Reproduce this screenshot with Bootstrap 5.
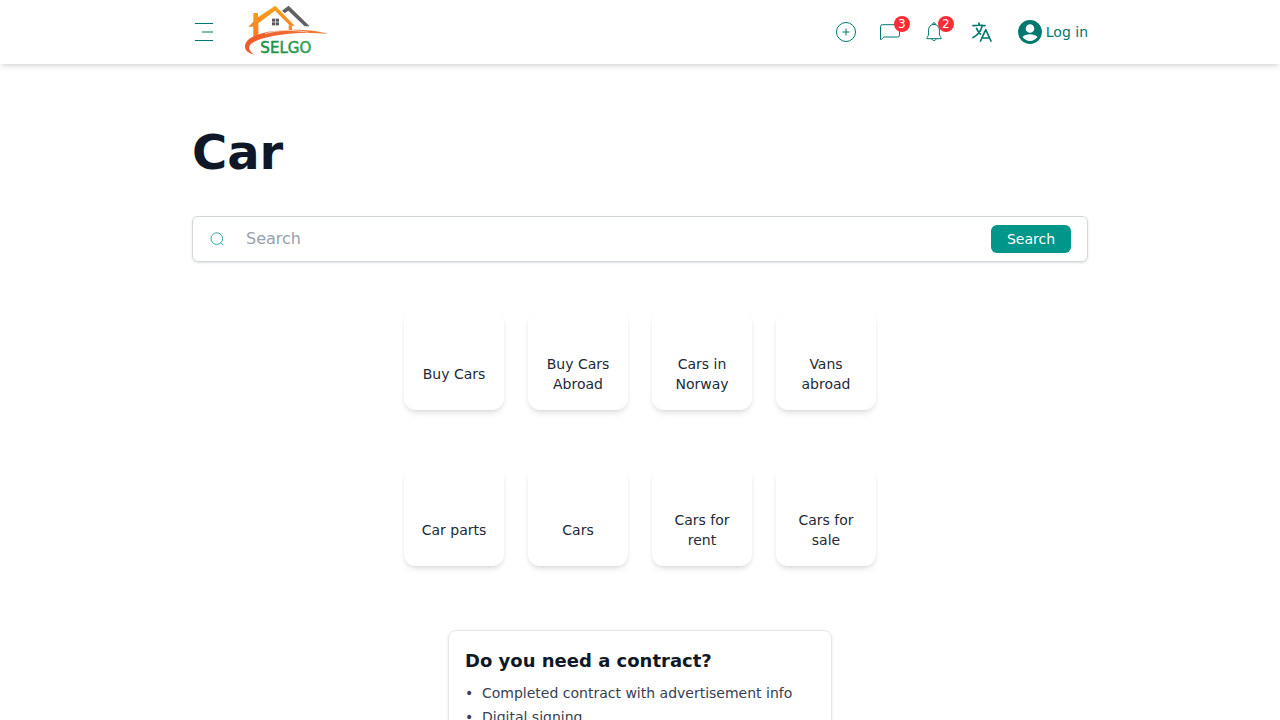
<!DOCTYPE html>
<html lang="en">
<head>
<meta charset="utf-8">
<meta name="viewport" content="width=device-width, initial-scale=1">
<title>Selgo – Car</title>
<link href="https://cdn.jsdelivr.net/npm/bootstrap@5.3.0/dist/css/bootstrap.min.css" rel="stylesheet">
<style>
body{font-family:"DejaVu Sans",sans-serif;background:#fff;color:#101828;height:100vh;overflow:hidden}
.wrap{width:896px;margin:0 auto}
.topbar{height:64px;background:#fff;box-shadow:0 4px 6px -1px rgba(0,0,0,.1),0 2px 4px -2px rgba(0,0,0,.1)}
.teal,.teal a{color:#00786f;text-decoration:none}
.logo{margin-left:28px;margin-top:-4px}
.actions{gap:20px}
.slot{width:24px;height:24px}
.count{position:absolute;left:16px;top:-4px;width:16px;height:16px;border-radius:50%;background:#fb2c36;color:#fff;font-size:12px;line-height:16px;text-align:center}
.login{font-size:14px;line-height:20px;margin-left:4px;gap:4px}
svg{display:block;flex:none}
h1{font-size:48px;line-height:48px;font-weight:700;margin:64px 0 40px}
.searchbox{height:46px;border:1px solid #d1d5dc;border-radius:6px;padding:0 16px;box-shadow:0 1px 3px rgba(0,0,0,.1),0 1px 2px -1px rgba(0,0,0,.1)}
.searchbox input{outline:0;padding:0;margin:-1px 0 0 21px;font-size:16px;line-height:24px;height:24px}
.searchbox input::placeholder{color:#99a1af;opacity:1}
.searchbox .go{width:80px;height:28px;padding:0;background:#009689;color:#fff;border:0;border-radius:6px;font-size:14px;line-height:28px}
.tiles{display:grid;grid-template-columns:repeat(4,100px);gap:56px 24px;justify-content:center;margin-top:48px}
.tile{height:100px;border-radius:12px;padding:28px 16px 0;color:#1e2939;font-size:14px;line-height:20px;text-decoration:none;box-shadow:0 4px 6px -1px rgba(0,0,0,.1),0 2px 4px -2px rgba(0,0,0,.1)}
.contract{width:384px;height:190px;margin:64px auto 0;border:1px solid #e5e7eb;border-radius:8px;padding:16px;box-shadow:0 1px 3px rgba(0,0,0,.1),0 1px 2px -1px rgba(0,0,0,.1)}
.contract h2{font-size:18px;line-height:28px;font-weight:700;margin:0 0 8px}
.contract li{font-size:14px;line-height:20px;margin-bottom:4px;color:#364153;display:flex}
.contract li::before{content:"•";width:17px}
</style>
</head>
<body>
<header class="topbar">
  <nav class="wrap h-100 d-flex align-items-center justify-content-between teal">
    <div class="d-flex align-items-center">
      <svg width="24" height="24" viewBox="0 0 24 24" fill="none" stroke="currentColor"><path d="M3 3.500h18M3 20.500h18"/><path d="M10 12h11" stroke-width="2" opacity=".5"/></svg>
      <svg class="logo" width="86" height="52" viewBox="24 12 258 156" role="img" aria-label="Selgo">
        <defs>
          <linearGradient id="roof" x1="0" y1="0" x2="0" y2="1"><stop stop-color="#f9a21b"/><stop offset="1" stop-color="#f47b2a"/></linearGradient>
          <linearGradient id="swoosh"><stop stop-color="#ee5a2b"/><stop offset="1" stop-color="#f47a35"/></linearGradient>
          <linearGradient id="word"><stop stop-color="#1d8f45"/><stop offset="1" stop-color="#2da052"/></linearGradient>
        </defs>
        <path d="M138 32 158 17 221 79h-15L157 32l-11 8z" fill="#606062"/>
        <path d="M37 80 52 65V39h14v13L118 17l58 60h-14L117 32 67 70v33l-15 7V80z" fill="url(#roof)"/>
        <path d="M158 76h10v16h-10z" fill="#f58a30"/>
        <path d="M108 56h21v20h-21z" fill="#58585a"/><path d="M118.500 55v22M107 66h23" stroke="#fff" stroke-width="2"/>
        <path d="M57 164C30 160 23 145 29 130c10-24 61-38 124-40 49-2 96 3 123 12-30-3-67-4-98-2-57 4-119 16-135 34-8 10-2 22 14 30z" fill="url(#swoosh)"/>
        <path d="M87 101c45-13 86-12 130-4" fill="none" stroke="#fff" stroke-width="2"/>
        <text x="73" y="159" textLength="153" lengthAdjust="spacingAndGlyphs" font-family="DejaVu Sans,sans-serif" font-size="45" fill="url(#word)" stroke="url(#word)" stroke-width="1.500">SELGO</text>
      </svg>
    </div>
    <div class="actions d-flex align-items-center">
      <a class="slot" href="#" aria-label="New ad"><svg width="24" height="24" viewBox="0 0 24 24" fill="none" stroke="currentColor"><circle cx="12" cy="12" r="9.500"/><path d="M12 8.500v7M8.500 12h7"/></svg></a>
      <a class="slot position-relative" href="#" aria-label="Messages"><svg width="24" height="24" viewBox="0 0 24 24" fill="none" stroke="currentColor" stroke-linejoin="round"><path d="M2.500 19.500v-13q0-1.800 1.800-1.800h15.400q1.800 0 1.800 1.800v8.700q0 1.800-1.800 1.800H6.500q-.9 0-1.500.6l-1.600 1.900q-.5.500-.9 0z"/></svg><span class="count">3</span></a>
      <a class="slot position-relative" href="#" aria-label="Notifications"><svg width="24" height="24" viewBox="0 0 24 24" fill="none" stroke="currentColor" stroke-linejoin="round"><path d="M10.700 4.500V4a1.300 1.300 0 0 1 2.600 0v.5M12 4.400c-3.400 0-5.400 2.500-5.400 5.600v4c0 2-1.800 2.900-1.800 4.700h14.400c0-1.800-1.800-2.700-1.800-4.700v-4c0-3.100-2-5.600-5.400-5.600zM10 18.700c0 2.500 4 2.500 4 0"/></svg><span class="count">2</span></a>
      <a class="slot ms-1" href="#" aria-label="Language"><svg width="24" height="24" viewBox="0 0 24 24" fill="none" stroke="currentColor" stroke-width="1.700" stroke-linecap="round" stroke-linejoin="round"><path d="m10.500 21 5.250-11.250L21 21m-9-3h7.500M3 5.621a48.474 48.474 0 0 1 6-.371m0 0c1.120 0 2.233.038 3.334.114M9 5.250V3m3.334 2.364C11.176 10.658 7.690 15.080 3 17.502m9.334-12.138c.896.061 1.785.147 2.666.257m-4.589 8.495a18.023 18.023 0 0 1-3.827-5.802"/></svg></a>
      <a class="login d-flex align-items-center" href="#"><svg width="24" height="24" viewBox="0 0 24 24" fill="currentColor"><path fill-rule="evenodd" d="M12 .1a11.900 11.900 0 1 0 0 23.800A11.900 11.900 0 0 0 12 .1zM12 4.200a4.300 4.300 0 1 1 0 8.600 4.300 4.300 0 0 1 0-8.600zM12 21c-3.200 0-5.900-1.500-7.500-3.900C6 15 9 14.200 12 14.200s6 .8 7.500 2.900C17.900 19.500 15.200 21 12 21z"/></svg><span>Log in</span></a>
    </div>
  </nav>
</header>
<main class="wrap">
  <h1>Car</h1>
  <form class="searchbox d-flex align-items-center">
    <svg width="16" height="16" viewBox="0 0 16 16" fill="none" stroke="#009689" stroke-width=".8"><circle cx="7.800" cy="7.600" r="5.800"/><path d="m12 11.800 2.500 2.500"/></svg>
    <input class="flex-grow-1 border-0 bg-transparent" placeholder="Search" aria-label="Search">
    <button class="btn go" type="button">Search</button>
  </form>
  <div class="tiles">
    <a class="tile d-flex align-items-center justify-content-center text-center">Buy Cars</a>
    <a class="tile d-flex align-items-center justify-content-center text-center">Buy Cars Abroad</a>
    <a class="tile d-flex align-items-center justify-content-center text-center">Cars in Norway</a>
    <a class="tile d-flex align-items-center justify-content-center text-center">Vans abroad</a>
    <a class="tile d-flex align-items-center justify-content-center text-center">Car parts</a>
    <a class="tile d-flex align-items-center justify-content-center text-center">Cars</a>
    <a class="tile d-flex align-items-center justify-content-center text-center">Cars for rent</a>
    <a class="tile d-flex align-items-center justify-content-center text-center">Cars for sale</a>
  </div>
  <section class="contract">
    <h2>Do you need a contract?</h2>
    <ul class="list-unstyled mb-0">
      <li>Completed contract with advertisement info</li>
      <li>Digital signing</li>
    </ul>
  </section>
</main>
<script src="https://cdn.jsdelivr.net/npm/bootstrap@5.3.0/dist/js/bootstrap.bundle.min.js"></script>
</body>
</html>
